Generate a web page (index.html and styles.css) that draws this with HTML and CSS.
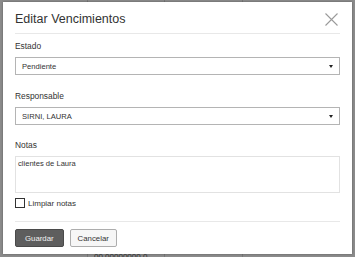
FILE: index.html
```html
<!DOCTYPE html>
<html lang="es">
<head>
<meta charset="utf-8">
<link rel="stylesheet" href="styles.css">
</head>
<body>
<div class="page">
  <div class="col c1"></div>
  <div class="col c2"><span class="under">00.00000000 0</span></div>
  <div class="col c3"></div>
  <div class="col c4"></div>
</div>
<div class="modal">
  <div class="header">
    <h4 class="title">Editar Vencimientos</h4>
    <svg class="close" width="13" height="13" viewBox="0 0 13 13"><path d="M0.5 0.5L12.5 12.5M12.5 0.5L0.5 12.5" stroke="#9a9a9a" stroke-width="1.1" fill="none"/></svg>
  </div>
  <div class="body">
    <div class="group g1">
      <div class="label">Estado</div>
      <div class="select"><span>Pendiente</span><i class="caret"></i></div>
    </div>
    <div class="group g2">
      <div class="label">Responsable</div>
      <div class="select"><span>SIRNI, LAURA</span><i class="caret"></i></div>
    </div>
    <div class="group g3">
      <div class="label">Notas</div>
      <div class="textarea">clientes de Laura</div>
    </div>
    <label class="check"><span class="box"></span><span>Limpiar notas</span></label>
  </div>
  <div class="footer">
    <button class="btn primary">Guardar</button>
    <button class="btn">Cancelar</button>
  </div>
</div>
</body>
</html>
```
FILE: styles.css
```css
* { box-sizing: border-box; }
html, body { margin: 0; padding: 0; }
body {
  width: 355px;
  height: 257px;
  overflow: hidden;
  background: #8b8b8b;
  font-family: "Liberation Sans", Arial, sans-serif;
  color: #333;
  position: relative;
}
.page {
  display: flex;
  height: 257px;
}
.col { border-right: 1px solid #777; height: 100%; position: relative; }
.c1 { width: 88px; }
.c2 { width: 77px; }
.c3 { width: 78px; }
.c4 { flex: 1; border-right: none; }
.under {
  position: absolute;
  left: 6px;
  top: 252px;
  font-size: 8px;
  line-height: 9px;
  color: #333;
}
.modal {
  position: absolute;
  left: 3px;
  top: 2px;
  width: 349px;
  height: 252px;
  background: #fff;
  box-shadow: 0 0 2px rgba(0,0,0,0.35);
  display: flex;
  flex-direction: column;
}
.header {
  margin: 0 12px;
  height: 32px;
  border-bottom: 1px solid #e8e8e8;
  display: flex;
  align-items: center;
  justify-content: space-between;
}
.title {
  margin: 0;
  font-weight: normal;
  font-size: 12.5px;
  line-height: 16px;
  color: #333;
  padding-top: 2px;
}
.close { margin-right: 2px; margin-top: 3px; }
.body {
  padding: 7px 12px 0;
  flex: 1;
}
.g1 { margin-bottom: 16px; }
.g2 { margin-bottom: 15px; }
.g3 { margin-bottom: 5px; }
.label {
  font-size: 8.4px;
  line-height: 11px;
  margin-bottom: 5px;
  color: #333;
}
.select {
  height: 18px;
  border: 1px solid #b4b4b4;
  background: #fff;
  display: flex;
  align-items: center;
  justify-content: space-between;
  padding: 0 6px 0 6px;
  font-size: 7.6px;
  color: #333;
}
.caret {
  width: 0;
  height: 0;
  border-left: 2.5px solid transparent;
  border-right: 2.5px solid transparent;
  border-top: 3px solid #222;
  margin-top: 1px;
}
.textarea {
  height: 37px;
  border: 1px solid #e2e2e2;
  padding: 2px 2px;
  font-size: 7.6px;
  line-height: 10px;
  color: #333;
}
.check {
  display: flex;
  align-items: center;
  gap: 3px;
  font-size: 8px;
  color: #333;
  height: 10px;
}
.box {
  width: 10px;
  height: 10px;
  border: 1.5px solid #333;
  background: #fff;
}
.footer {
  margin: 0 12px;
  border-top: 1px solid #e8e8e8;
  padding: 7px 0 7px;
  display: flex;
  gap: 6px;
}
.btn {
  height: 18px;
  padding: 0 7px;
  font-family: "Liberation Sans", Arial, sans-serif;
  font-size: 7.8px;
  border-radius: 2px;
  border: 1px solid #adadad;
  background: #f6f6f6;
  color: #333;
}
.btn.primary {
  background: #5e5e5e;
  border-color: #4a4a4a;
  color: #f2f2f2;
  padding: 0 9px;
}
```
